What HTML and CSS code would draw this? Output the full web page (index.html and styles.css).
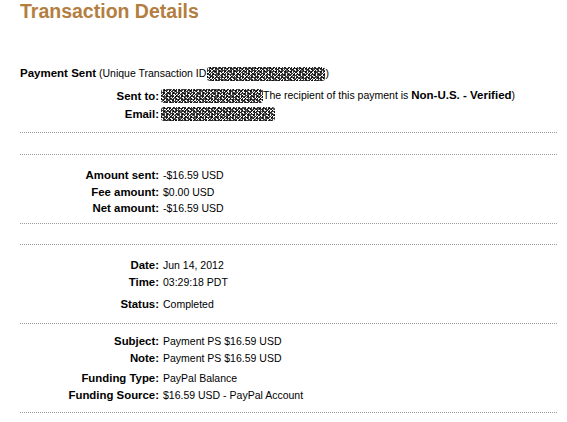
FILE: index.html
```html
<!DOCTYPE html>
<html>
<head>
<meta charset="utf-8">
<link rel="stylesheet" href="styles.css">
</head>
<body>
<div class="page">
  <h1 class="title">Transaction Details</h1>
  <div class="block summary">
    <p class="headline"><b>Payment Sent</b> (Unique Transaction ID<span class="redact r-id"></span>)</p>
    <div class="row r18 first"><span class="label">Sent to:</span><span class="value"><span class="redact r-name"></span>The recipient of this payment is <b>Non-U.S. - Verified</b>)</span></div>
    <div class="row"><span class="label">Email:</span><span class="value"><span class="redact r-mail"></span></span></div>
  </div>
  <div class="block spacer s21"></div>
  <div class="block amounts">
    <div class="row"><span class="label">Amount sent:</span><span class="value">-$16.59 USD</span></div>
    <div class="row"><span class="label">Fee amount:</span><span class="value">$0.00 USD</span></div>
    <div class="row r16"><span class="label">Net amount:</span><span class="value">-$16.59 USD</span></div>
  </div>
  <div class="block spacer s20"></div>
  <div class="block dates">
    <div class="row"><span class="label">Date:</span><span class="value">Jun 14, 2012</span></div>
    <div class="row r18"><span class="label">Time:</span><span class="value">03:29:18 PDT</span></div>
    <div class="row gap4"><span class="label">Status:</span><span class="value">Completed</span></div>
  </div>
  <div class="block details">
    <div class="row"><span class="label">Subject:</span><span class="value">Payment PS $16.59 USD</span></div>
    <div class="row"><span class="label">Note:</span><span class="value">Payment PS $16.59 USD</span></div>
    <div class="row gap3"><span class="label">Funding Type:</span><span class="value">PayPal Balance</span></div>
    <div class="row"><span class="label">Funding Source:</span><span class="value">$16.59 USD - PayPal Account</span></div>
  </div>
</div>
</body>
</html>
```

FILE: styles.css
```css
html, body {
  margin: 0;
  padding: 0;
  background: #fff;
}

.page {
  width: 537px;
  padding-left: 20px;
  font-family: "Liberation Sans", Arial, sans-serif;
  font-size: 10.5px;
  color: #000;
}

.page b {
  font-size: 11.5px;
}

.title {
  margin: 0;
  font-size: 19.5px;
  line-height: 22px;
  font-weight: bold;
  color: #b37e40;
}

.block {
  border-bottom: 1px dotted #9a9a9a;
}

.summary {
  padding-bottom: 10px;
}

.headline {
  margin: 43px 0 0;
  line-height: 17px;
  white-space: nowrap;
}

.row {
  display: flex;
  align-items: center;
  height: 17px;
  white-space: nowrap;
}

.row.first { margin-top: 5px; }
.row.r18 { height: 18px; }
.row.r16 { height: 16px; }
.row.gap4 { margin-top: 4px; }
.row.gap3 { margin-top: 3px; }

.label {
  flex: 0 0 139px;
  text-align: right;
  font-weight: bold;
  font-size: 11.4px;
}

.value {
  margin-left: 4px;
  display: inline-block;
}

.spacer.s21 { height: 21px; }
.spacer.s20 { height: 20px; }

.amounts { padding: 11px 0 7px; }
.dates { padding: 11px 0 11px; }
.details { padding: 8px 0 9px; }

.redact {
  display: inline-block;
  height: 14px;
  vertical-align: middle;
  background-color: #9c9c9c;
  background-image:
    repeating-linear-gradient(37deg, rgba(0,0,0,0.75) 0 1px, transparent 1px 3px),
    repeating-linear-gradient(-52deg, rgba(0,0,0,0.6) 0 1px, transparent 1px 4px),
    repeating-conic-gradient(#f4f4f4 0 25%, #3a3a3a 0 50%);
  background-size: auto, auto, 3px 3px;
  border-radius: 3px;
}

.r-id { width: 118px; margin-left: 1px; }
.r-name { width: 102px; margin-left: -2px; margin-right: 0; }
.r-mail { width: 114px; margin-left: -2px; }
```
